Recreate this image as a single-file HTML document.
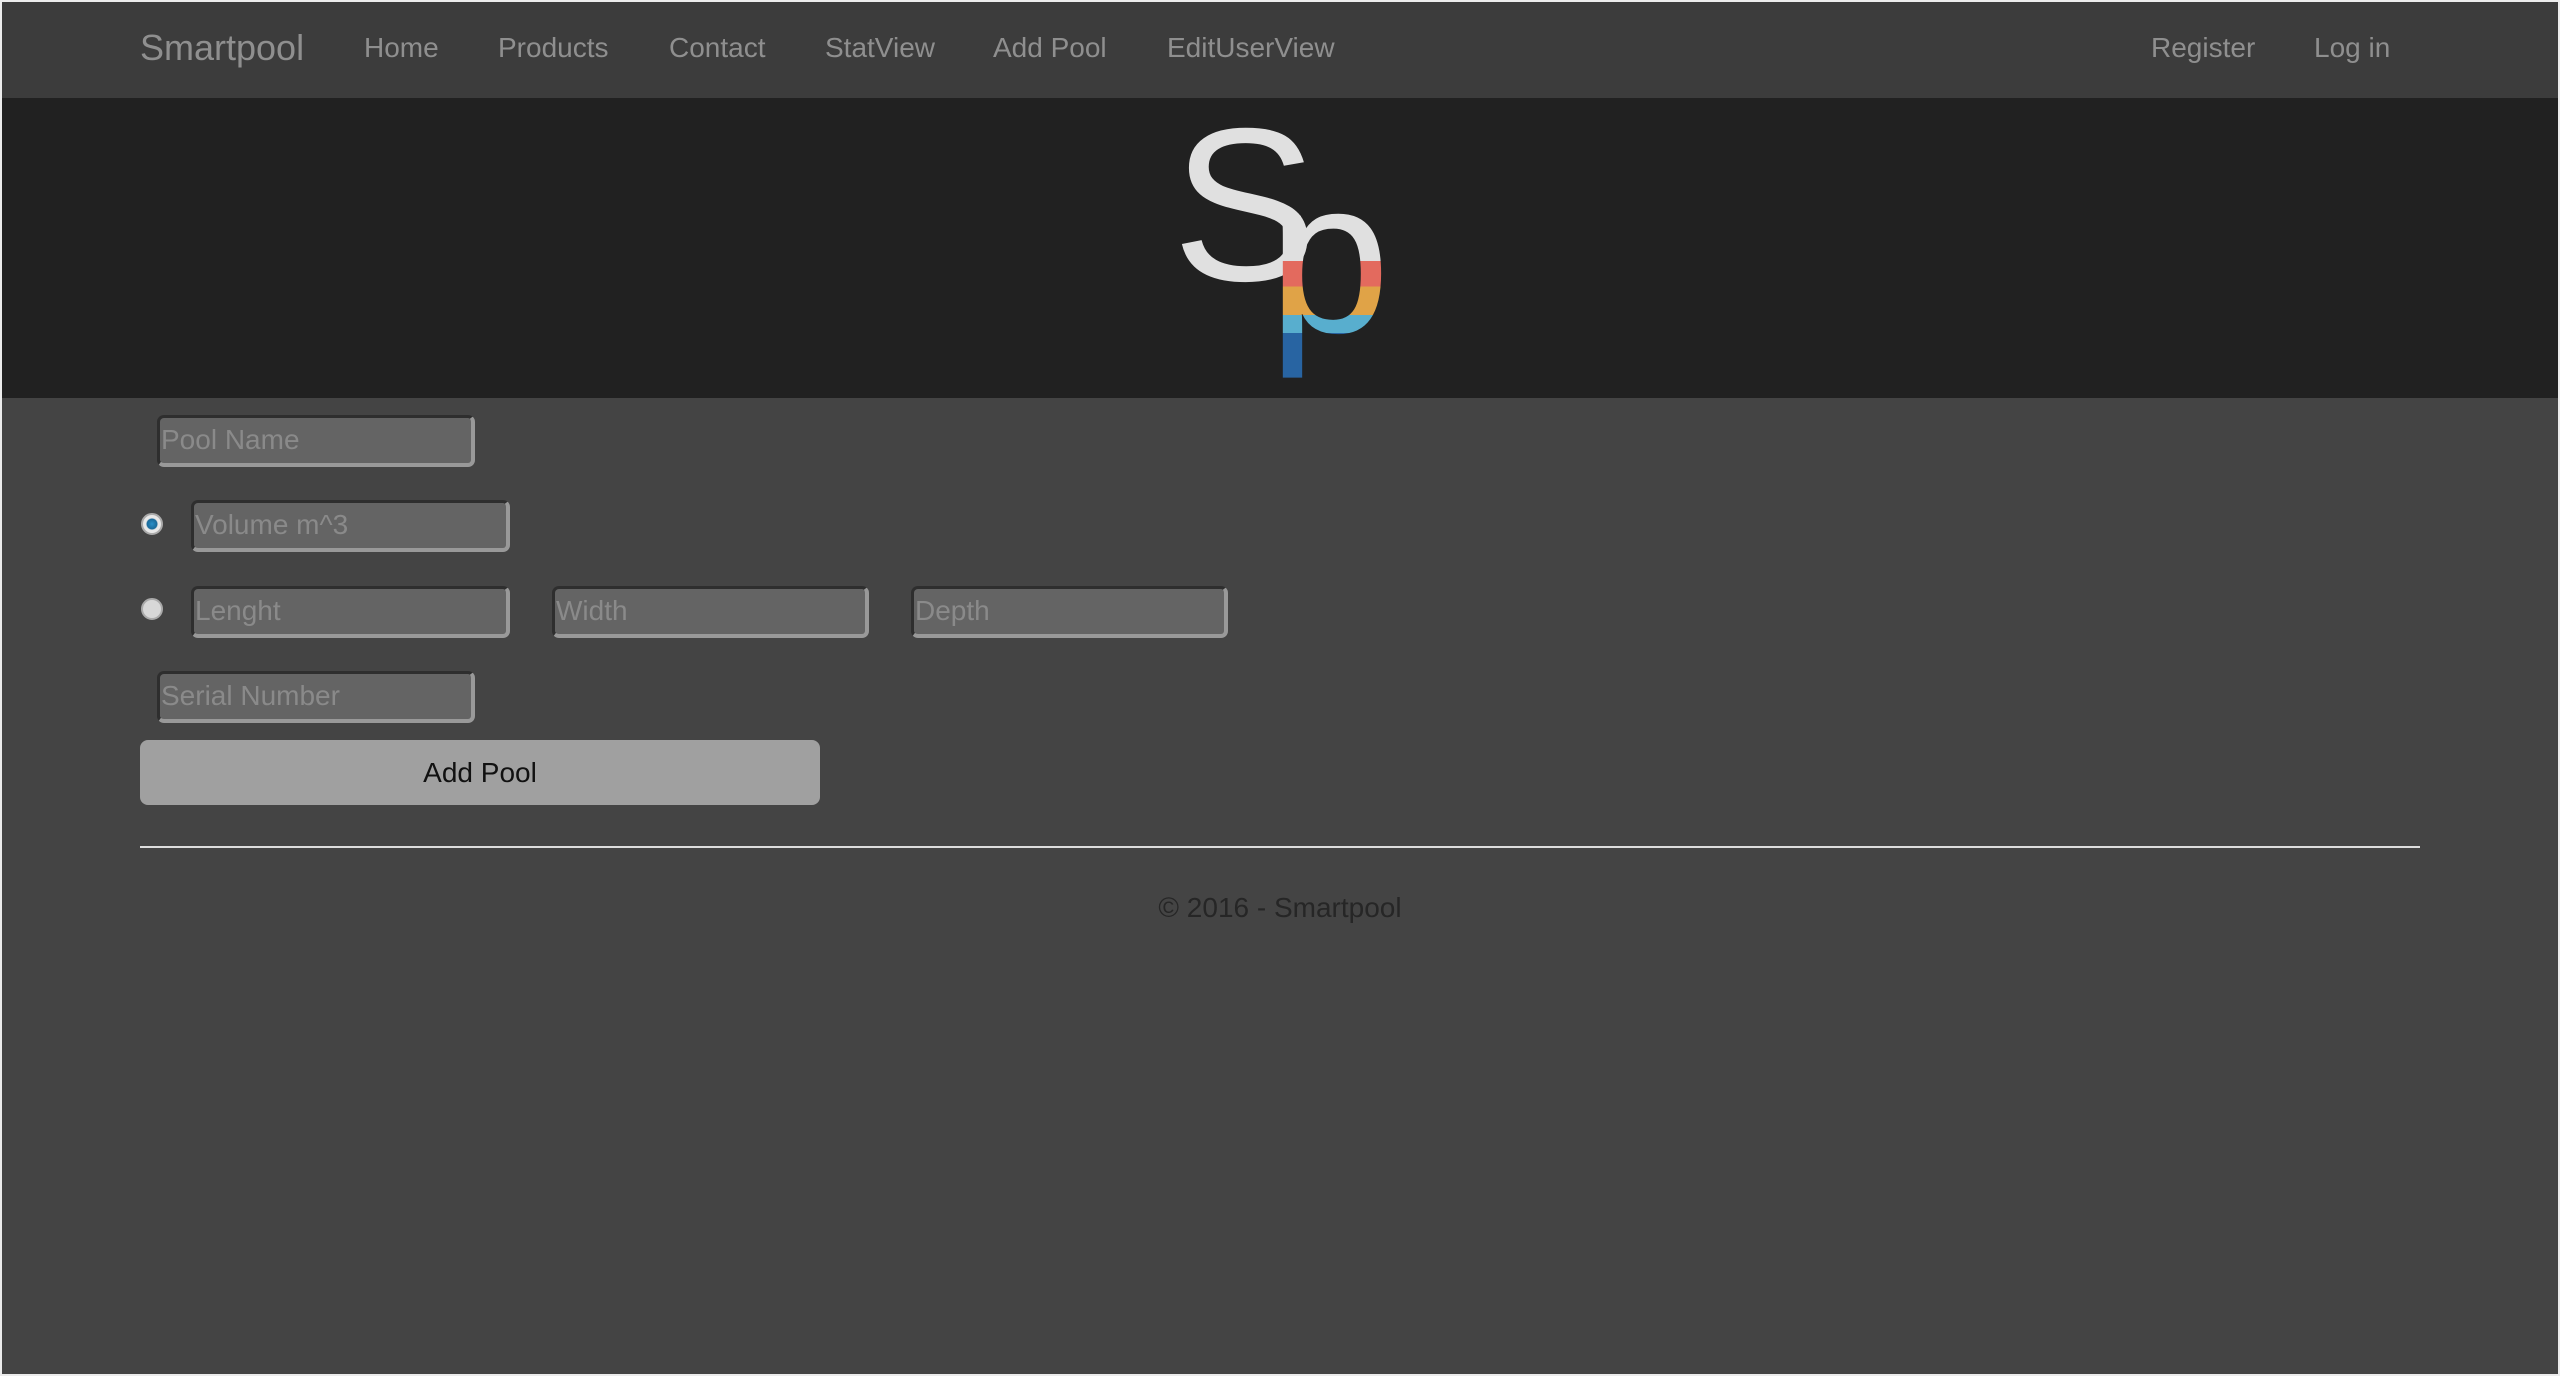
<!DOCTYPE html>
<html><head><meta charset="utf-8"><style>
html,body{margin:0;padding:0}
body{width:2560px;height:1376px;background:#444;font-family:"Liberation Sans",Arial,sans-serif;position:relative;overflow:hidden}
.frame{position:absolute;left:0;top:0;width:2556px;height:1372px;border:2px solid #ececec;pointer-events:none;z-index:9}
.nav{position:absolute;left:0;top:0;width:2560px;height:98px;background:#3c3c3c}
.nav span{position:absolute;top:30px;font-size:28px;color:#8f8f8f;line-height:36px;white-space:nowrap}
.nav .brand{font-size:36px;top:26px;line-height:44px}
.band{position:absolute;left:0;top:98px;width:2560px;height:300px;background:#212121}
.inp{position:absolute;height:52px;box-sizing:border-box;background:#646464;border-radius:7px;border-style:solid;border-width:3px 4px 4px 3px;border-color:#2e2e2e #999 #999 #2e2e2e;color:#8a8a8a;font-size:28px;line-height:44px;padding-left:1px;white-space:nowrap;overflow:hidden}
.radio{position:absolute;width:22px;height:22px;border-radius:50%;box-sizing:border-box;background:#d8d8d8;border:2px solid #aaa}
.radio.on{background:radial-gradient(circle,#2a8fc8 0,#1a6a9a 5px,#e8e8e8 6px)}
.btn{position:absolute;left:140px;top:740px;width:680px;height:65px;background:#a0a0a0;border-radius:8px;color:#111;font-size:28px;text-align:center;line-height:65px}
.hr{position:absolute;left:140px;top:846px;width:2280px;height:2px;background:#ddd}
.foot{position:absolute;left:0;width:2560px;top:890px;text-align:center;font-size:28px;color:#262626;line-height:36px}
</style></head><body>
<div class="frame"></div>
<div class="nav">
<span class="brand" style="left:140px">Smartpool</span>
<span style="left:364px">Home</span>
<span style="left:498px">Products</span>
<span style="left:669px">Contact</span>
<span style="left:825px">StatView</span>
<span style="left:993px">Add Pool</span>
<span style="left:1167px">EditUserView</span>
<span style="left:2151px">Register</span>
<span style="left:2314px">Log in</span>
</div>
<div class="band"></div>
<svg style="position:absolute;left:0;top:0" width="2560" height="400">
<defs>
<linearGradient id="g" gradientUnits="userSpaceOnUse" x1="0" y1="200" x2="0" y2="380">
<stop offset="0.34" stop-color="#e0e0e0"/><stop offset="0.34" stop-color="#e36a5e"/>
<stop offset="0.48" stop-color="#e36a5e"/><stop offset="0.48" stop-color="#e0a347"/>
<stop offset="0.64" stop-color="#e0a347"/><stop offset="0.64" stop-color="#58aece"/>
<stop offset="0.74" stop-color="#58aece"/><stop offset="0.74" stop-color="#2864a2"/>
<stop offset="1" stop-color="#2864a2"/>
</linearGradient>
</defs>
<text x="1172" y="280" font-family="Liberation Sans, sans-serif" font-size="218" fill="#e0e0e0">S</text>
<text x="1268" y="332" font-family="Liberation Sans, sans-serif" font-size="220" fill="url(#g)">p</text>
</svg>
<div class="inp" style="left:157px;top:415px;width:318px">Pool Name</div>
<div class="radio on" style="left:141px;top:513px"></div>
<div class="inp" style="left:191px;top:500px;width:319px">Volume m^3</div>
<div class="radio" style="left:141px;top:598px"></div>
<div class="inp" style="left:191px;top:586px;width:319px">Lenght</div>
<div class="inp" style="left:552px;top:586px;width:317px">Width</div>
<div class="inp" style="left:911px;top:586px;width:317px">Depth</div>
<div class="inp" style="left:157px;top:671px;width:318px">Serial Number</div>
<div class="btn">Add Pool</div>
<div class="hr"></div>
<div class="foot">© 2016 - Smartpool</div>
</body></html>
